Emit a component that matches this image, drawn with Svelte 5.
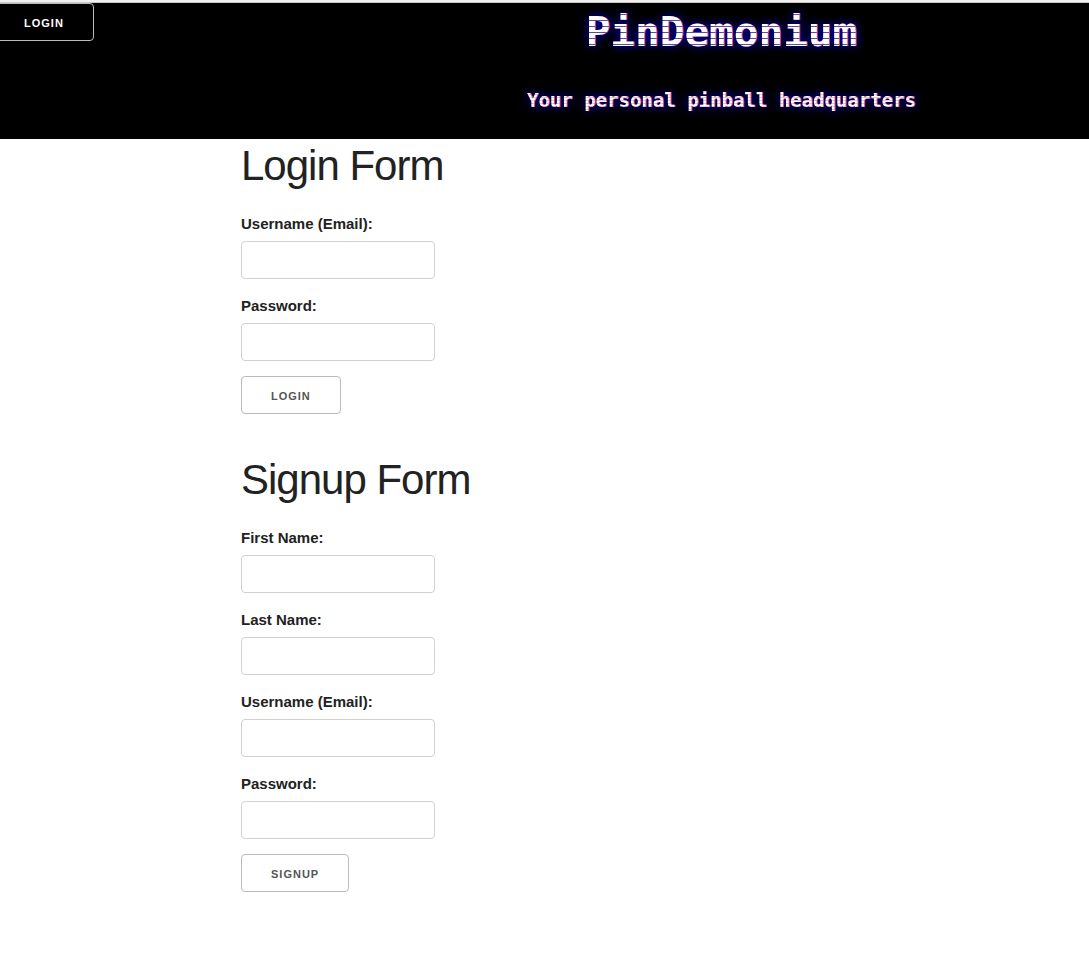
<script>
  const forms = [
    {
      id: 'login',
      title: 'Login Form',
      action: 'Login',
      fields: [
        { name: 'username', label: 'Username (Email):', type: 'text' },
        { name: 'password', label: 'Password:', type: 'password' }
      ]
    },
    {
      id: 'signup',
      title: 'Signup Form',
      action: 'Signup',
      fields: [
        { name: 'first', label: 'First Name:', type: 'text' },
        { name: 'last', label: 'Last Name:', type: 'text' },
        { name: 'username', label: 'Username (Email):', type: 'text' },
        { name: 'password', label: 'Password:', type: 'password' }
      ]
    }
  ];
</script>

<header>
  <nav><button class="nav-login" type="button">Login</button></nav>
  <div class="brand">
    <h1>PinDemonium</h1>
    <p>Your personal pinball headquarters</p>
  </div>
</header>

<main>
  {#each forms as form}
    <form onsubmit={(e) => e.preventDefault()}>
      <h2>{form.title}</h2>
      {#each form.fields as field}
        <label for="{form.id}-{field.name}">{field.label}</label>
        <input id="{form.id}-{field.name}" type={field.type} />
      {/each}
      <button type="submit">{form.action}</button>
    </form>
  {/each}
</main>

<style>
  :global(body) {
    margin: 0;
    background: #fff;
    color: #222;
    font: 15px/24px "Liberation Sans", Arial, sans-serif;
  }

  header {
    display: grid;
    grid-template-columns: 32.5% 1fr;
    min-height: 136px;
    padding-top: 1px;
    background: #000;
    border-top: 2px solid #f0f0f0;
    box-shadow: inset 0 1px #c8c8c8;
    overflow: hidden;
  }

  .brand {
    text-align: center;
    font-family: "DejaVu Sans Mono", monospace;
    font-weight: bold;
    filter: drop-shadow(1px 0 0 #f04468) drop-shadow(0 0 5px #0000b8);
  }

  h1,
  .brand p {
    margin: 0;
    color: transparent;
    -webkit-background-clip: text;
    background-clip: text;
  }

  h1 {
    font-size: 41px;
    line-height: 58px;
    background-image: repeating-linear-gradient(#fff 0 5px, #55519f 5px 6px);
  }

  .brand p {
    margin-top: 25px;
    font-size: 19px;
    line-height: 28px;
    background-image: repeating-linear-gradient(#fff 0 2px, #e0c8dc 2px 3px);
  }

  main {
    padding-left: 22.13%;
  }

  form {
    display: flex;
    flex-direction: column;
    align-items: flex-start;
    margin-bottom: 24px;
  }

  h2 {
    margin: 0 0 20px;
    font-size: 42px;
    line-height: 53px;
    font-weight: 300;
    letter-spacing: -1px;
  }

  label {
    margin-bottom: 5px;
    font-weight: 600;
  }

  input {
    box-sizing: border-box;
    width: 194px;
    height: 38px;
    margin: 0 0 15px;
    padding: 6px 10px;
    border: 1px solid #d1d1d1;
    border-radius: 4px;
    background: #fff;
    font: inherit;
  }

  button {
    box-sizing: border-box;
    height: 38px;
    margin: 0 0 15px;
    padding: 1px 29px 0;
    border: 1px solid #bbb;
    border-radius: 4px;
    background: transparent;
    color: #555;
    font: 600 11px/36px "Liberation Sans", Arial, sans-serif;
    letter-spacing: 1px;
    text-transform: uppercase;
  }

  .nav-login {
    margin-left: -6px;
    color: #fff;
  }
</style>
